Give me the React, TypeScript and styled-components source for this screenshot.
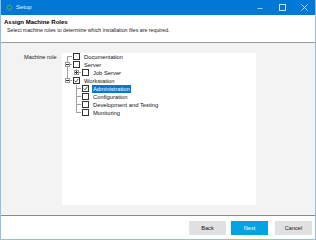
import React from "react";
import styled, { createGlobalStyle } from "styled-components";

const Global = createGlobalStyle`
  html, body { margin: 0; padding: 0; background: #fff; }
  body { font-family: "Liberation Sans", Arial, sans-serif; }
  * { box-sizing: border-box; }
`;

const Window = styled.div`
  width: 316px;
  height: 240px;
  display: flex;
  flex-direction: column;
  border: 1px solid #8ec0ea;
  border-top: none;
  background: #fff;
  overflow: hidden;
`;

const TitleBar = styled.div`
  height: 15px;
  flex: none;
  background: #0078d7;
  display: flex;
  align-items: center;
  padding-left: 5px;
  color: #fff;
  font-size: 6px;
`;

const TitleText = styled.span`
  margin-left: 3px;
  flex: 1;
  line-height: 15px;
  color: #e8f2fb;
`;

const Control = styled.div`
  width: 22px;
  height: 15px;
  display: flex;
  align-items: center;
  justify-content: center;
`;

const Header = styled.div`
  height: 28px;
  flex: none;
  border-bottom: 1px solid #9a9a9a;
  padding: 3px 0 0 3px;
  display: flex;
  flex-direction: column;
`;

const HeaderTitle = styled.div`
  font-weight: bold;
  font-size: 6px;
  line-height: 8px;
  color: #000;
`;

const HeaderSub = styled.div`
  font-size: 5.25px;
  line-height: 8px;
  color: #222;
  padding-left: 3px;
`;

const Content = styled.div`
  flex: 1;
  background: #f3f3f3;
  display: flex;
  padding: 10px 0 0 23px;
`;

const FieldLabel = styled.div`
  width: 38px;
  font-size: 5.7px;
  line-height: 8px;
  color: #222;
`;

const TreePanel = styled.div`
  width: 194px;
  height: 152px;
  background: #fff;
  padding-left: 1px;
  display: flex;
  flex-direction: column;
`;

const Row = styled.div`
  height: 8px;
  display: flex;
  align-items: flex-start;
`;

const Gutter = styled.svg`
  width: 9px;
  height: 8px;
  flex: none;
  display: block;
`;

const Check = styled.svg`
  width: 7px;
  height: 7px;
  flex: none;
  display: block;
  margin-left: 1px;
`;

const NodeLabel = styled.span<{ $selected?: boolean }>`
  margin-left: ${(p) => (p.$selected ? "3px" : "4px")};
  padding: 0 ${(p) => (p.$selected ? "1px" : "0")};
  font-size: 5.8px;
  line-height: 8px;
  height: 8px;
  white-space: nowrap;
  color: ${(p) => (p.$selected ? "#fff" : "#111")};
  background: ${(p) => (p.$selected ? "#0078d7" : "transparent")};
`;

const Footer = styled.div`
  height: 24px;
  flex: none;
  border-top: 1px solid #8a8a8a;
  display: flex;
  align-items: center;
  justify-content: flex-end;
  padding-right: 3px;
`;

const Button = styled.div<{ $primary?: boolean; $apart?: boolean }>`
  width: 37px;
  height: 14px;
  margin-left: ${(p) => (p.$apart ? "7px" : "5px")};
  background: ${(p) => (p.$primary ? "#04a3df" : "#e1e1e1")};
  color: ${(p) => (p.$primary ? "#fff" : "#111")};
  font-size: 5.6px;
  display: flex;
  align-items: center;
  justify-content: center;
`;

type Conn = "corner" | "tee" | "end" | "vert" | "none";

const LINE = "#a0a0a0";

function Connector({ kind, expander }: { kind: Conn; expander?: "+" | "-" }) {
  return (
    <Gutter viewBox="0 0 9 8">
      {(kind === "tee" || kind === "vert") && <rect x="4" y="0" width="1" height="8" fill={LINE} />}
      {kind === "corner" && <rect x="4" y="3" width="1" height="5" fill={LINE} />}
      {kind === "end" && <rect x="4" y="0" width="1" height="4" fill={LINE} />}
      {kind !== "vert" && kind !== "none" && <rect x="4" y="3" width="5" height="1" fill={LINE} />}
      {expander && (
        <g>
          <rect x="2.5" y="1.5" width="4" height="4" fill="#fff" stroke="#9a9a9a" strokeWidth="1" />
          <rect x="3" y="3" width="3" height="1" fill="#333" />
          {expander === "+" && <rect x="4" y="2" width="1" height="3" fill="#333" />}
        </g>
      )}
    </Gutter>
  );
}

function CheckBox({ checked }: { checked?: boolean }) {
  return (
    <Check viewBox="0 0 7 7">
      <rect x="0.5" y="0.5" width="6" height="6" fill="#fff" stroke="#333" strokeWidth="1" />
      {checked && (
        <path d="M1.6 3.6 L2.9 4.9 L5.4 1.8" fill="none" stroke="#333" strokeWidth="0.9" />
      )}
    </Check>
  );
}

type Node = {
  label: string;
  gutters: { kind: Conn; expander?: "+" | "-" }[];
  checked?: boolean;
  selected?: boolean;
};

const nodes: Node[] = [
  { label: "Documentation", gutters: [{ kind: "corner" }] },
  { label: "Server", gutters: [{ kind: "tee", expander: "-" }] },
  { label: "Job Server", gutters: [{ kind: "vert" }, { kind: "end", expander: "+" }] },
  { label: "Workstation", gutters: [{ kind: "end", expander: "-" }], checked: true },
  { label: "Administration", gutters: [{ kind: "none" }, { kind: "tee" }], checked: true, selected: true },
  { label: "Configuration", gutters: [{ kind: "none" }, { kind: "tee" }] },
  { label: "Development and Testing", gutters: [{ kind: "none" }, { kind: "tee" }] },
  { label: "Monitoring", gutters: [{ kind: "none" }, { kind: "end" }] },
];

export default function App() {
  return (
    <>
      <Global />
      <Window>
        <TitleBar>
          <svg width="7" height="7" viewBox="0 0 7 7">
            <path d="M3.5 0.3 L6.4 2 L6.4 5 L3.5 6.7 L0.6 5 L0.6 2 Z" fill="#2a9d8f" />
            <circle cx="3.5" cy="3.5" r="1.2" fill="#0b6f8a" />
          </svg>
          <TitleText>Setup</TitleText>
          <Control>
            <svg width="6" height="6" viewBox="0 0 6 6">
              <rect x="0.5" y="3" width="5" height="0.8" fill="#cfe4f7" />
            </svg>
          </Control>
          <Control>
            <svg width="7" height="7" viewBox="0 0 7 7">
              <rect x="0.5" y="0.5" width="6" height="6" fill="none" stroke="#cfe4f7" strokeWidth="1" />
            </svg>
          </Control>
          <Control>
            <svg width="7" height="7" viewBox="0 0 7 7">
              <path d="M0.5 0.5 L6.5 6.5 M6.5 0.5 L0.5 6.5" stroke="#cfe4f7" strokeWidth="0.9" />
            </svg>
          </Control>
        </TitleBar>
        <Header>
          <HeaderTitle>Assign Machine Roles</HeaderTitle>
          <HeaderSub>Select machine roles to determine which installation files are required.</HeaderSub>
        </Header>
        <Content>
          <FieldLabel>Machine role</FieldLabel>
          <TreePanel>
            {nodes.map((n) => (
              <Row key={n.label}>
                {n.gutters.map((g, i) => (
                  <Connector key={i} kind={g.kind} expander={g.expander} />
                ))}
                <CheckBox checked={n.checked} />
                <NodeLabel $selected={n.selected}>{n.label}</NodeLabel>
              </Row>
            ))}
          </TreePanel>
        </Content>
        <Footer>
          <Button>Back</Button>
          <Button $primary>Next</Button>
          <Button $apart>Cancel</Button>
        </Footer>
      </Window>
    </>
  );
}
